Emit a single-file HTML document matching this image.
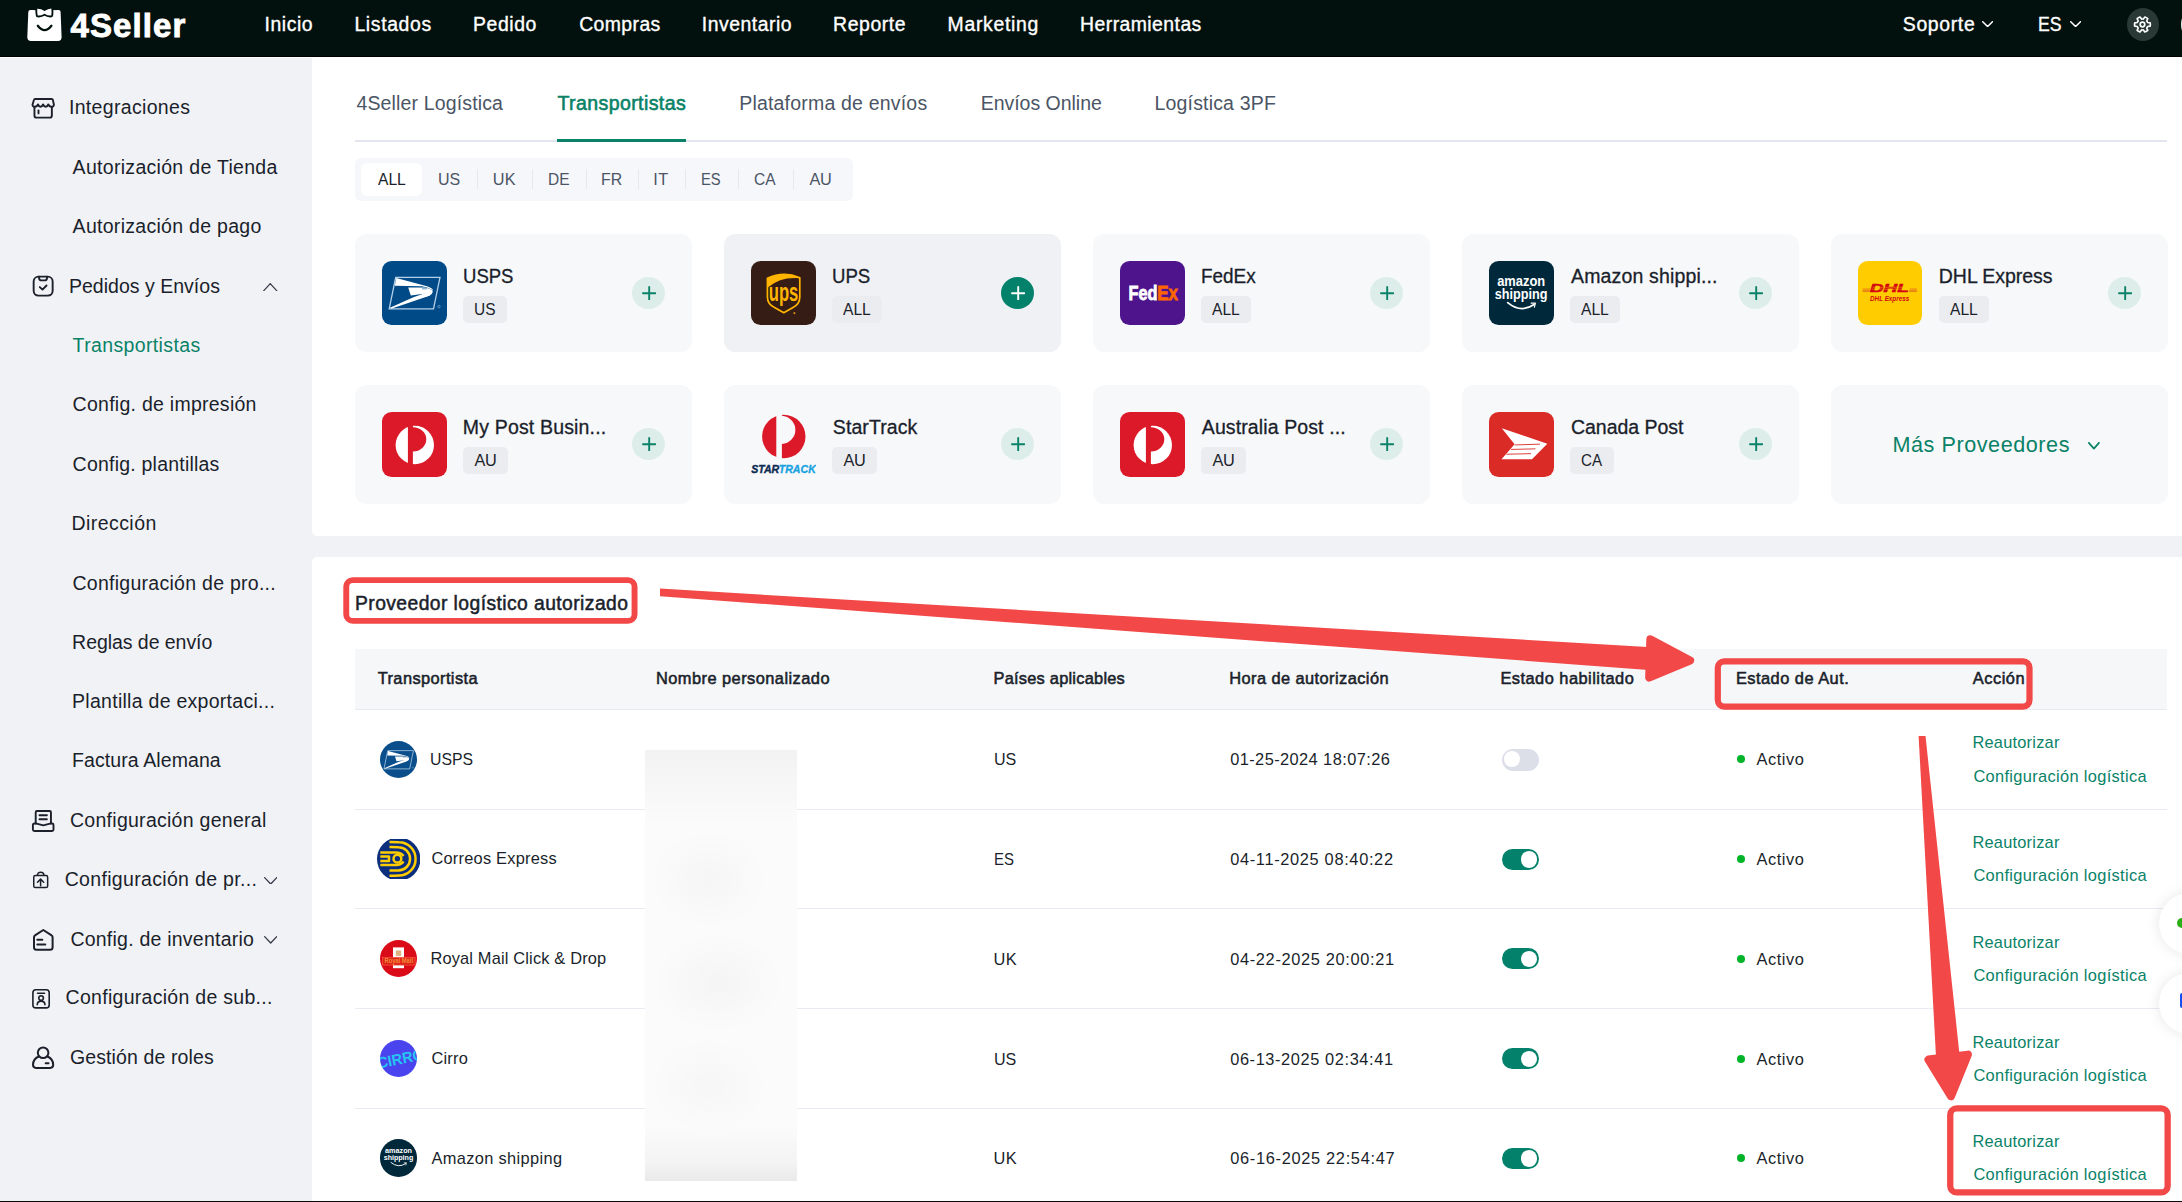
<!DOCTYPE html>
<html><head><meta charset="utf-8"><title>4Seller</title><style>
*{box-sizing:border-box;margin:0;padding:0}
html,body{width:2182px;height:1202px;overflow:hidden;background:#f1f2f6;font-family:"Liberation Sans",sans-serif}
body{position:relative}
div,span.t,svg{position:absolute}
span.t{white-space:pre;display:block}
</style></head><body><div style="left:0px;top:0px;width:2182px;height:57px;background:#02110e;"></div><div style="left:0px;top:56px;width:2182px;height:1px;background:#000;"></div><div style="left:0px;top:57px;width:312px;height:1px;background:#fff;"></div><svg style="left:27px;top:7px" width="36" height="35" viewBox="0 0 36 35">
<path d="M3.300 3.100 H31.600 Q33.500 3.100 33.600 5 L34.600 30 Q34.600 33.900 31 33.900 H4 Q0.300 33.900 0.300 30 L1.300 5 Q1.400 3.100 3.300 3.100Z" fill="#fff"/>
<path d="M10.300 1.700 Q13.800 1.500 17.500 4.100 Q21.200 1.500 24.300 1.500 Q24.900 5 24.300 8.500 Q21.200 9 17.500 6.700 Q13.800 9 10.700 8.500 Q9.900 5 10.300 1.700Z" fill="#02110e" stroke="#02110e" stroke-width="3.600" stroke-linejoin="round"/>
<rect x="6" y="0" width="24" height="3.100" fill="#02110e"/>
<path d="M10.300 1.700 Q13.800 1.500 17.500 4.100 Q21.200 1.500 24.300 1.500 Q24.900 5 24.300 8.500 Q21.200 9 17.500 6.700 Q13.800 9 10.700 8.500 Q9.900 5 10.300 1.700Z" fill="#fff"/>
<path d="M10.800 18.800 Q17.600 27.500 24.400 18.800" fill="none" stroke="#02110e" stroke-width="2.300" stroke-linecap="round"/>
</svg><span class="t" style="top:6.00px;font-size:33px;line-height:40px;color:#fff;left:70.50px;letter-spacing:1.099px;font-weight:700;-webkit-text-stroke:0.9px #fff;">4Seller</span><span class="t" style="top:13.00px;font-size:19.4px;line-height:23px;color:#fff;left:264.60px;letter-spacing:0.543px;-webkit-text-stroke:0.35px #fff;">Inicio</span><span class="t" style="top:13.00px;font-size:19.4px;line-height:23px;color:#fff;left:354.40px;letter-spacing:0.653px;-webkit-text-stroke:0.35px #fff;">Listados</span><span class="t" style="top:13.00px;font-size:19.4px;line-height:23px;color:#fff;left:473.10px;letter-spacing:0.581px;-webkit-text-stroke:0.35px #fff;">Pedido</span><span class="t" style="top:13.00px;font-size:19.4px;line-height:23px;color:#fff;left:579.20px;letter-spacing:0.406px;-webkit-text-stroke:0.35px #fff;">Compras</span><span class="t" style="top:13.00px;font-size:19.4px;line-height:23px;color:#fff;left:701.80px;letter-spacing:0.514px;-webkit-text-stroke:0.35px #fff;">Inventario</span><span class="t" style="top:13.00px;font-size:19.4px;line-height:23px;color:#fff;left:833.10px;letter-spacing:0.583px;-webkit-text-stroke:0.35px #fff;">Reporte</span><span class="t" style="top:13.00px;font-size:19.4px;line-height:23px;color:#fff;left:947.60px;letter-spacing:0.706px;-webkit-text-stroke:0.35px #fff;">Marketing</span><span class="t" style="top:13.00px;font-size:19.4px;line-height:23px;color:#fff;left:1080.10px;letter-spacing:0.438px;-webkit-text-stroke:0.35px #fff;">Herramientas</span><span class="t" style="top:13.00px;font-size:19.4px;line-height:23px;color:#fff;left:1902.80px;letter-spacing:0.662px;-webkit-text-stroke:0.35px #fff;">Soporte</span><span class="t" style="top:13.00px;font-size:19.4px;line-height:23px;color:#fff;left:2038.19px;transform:scaleX(0.9104);transform-origin:0 0;-webkit-text-stroke:0.35px #fff;">ES</span><svg style="left:1981.6px;top:21px" width="11.2" height="6.3" viewBox="0 0 11.2 6.3"><path d="M0.75 0.75 L5.6 5.55 L10.45 0.75" fill="none" stroke="#fff" stroke-width="1.5" stroke-linecap="round" stroke-linejoin="round"/></svg><svg style="left:2069.8px;top:21px" width="11.2" height="6.3" viewBox="0 0 11.2 6.3"><path d="M0.75 0.75 L5.6 5.55 L10.45 0.75" fill="none" stroke="#fff" stroke-width="1.5" stroke-linecap="round" stroke-linejoin="round"/></svg><div style="left:2127px;top:8.1px;width:32px;height:32.9px;border-radius:50%;background:#2a3935;"></div><svg style="left:0;top:0" width="2182" height="57" viewBox="0 0 2182 57" fill="none" stroke="#fff" stroke-width="1.700" stroke-linejoin="round">
<path d="M2147.58 26.47 L2150.18 26.14 A7.9 7.9 0 0 0 2150.18 22.86 L2147.58 22.53 A5.5 5.5 0 0 0 2146.72 21.04 L2147.74 18.63 A7.9 7.9 0 0 0 2144.89 16.99 L2143.31 19.07 A5.5 5.5 0 0 0 2141.59 19.07 L2140.01 16.99 A7.9 7.9 0 0 0 2137.16 18.63 L2138.18 21.04 A5.5 5.5 0 0 0 2137.32 22.53 L2134.72 22.86 A7.9 7.9 0 0 0 2134.72 26.14 L2137.32 26.47 A5.5 5.5 0 0 0 2138.18 27.96 L2137.16 30.37 A7.9 7.9 0 0 0 2140.01 32.01 L2141.59 29.93 A5.5 5.5 0 0 0 2143.31 29.93 L2144.89 32.01 A7.9 7.9 0 0 0 2147.74 30.37 L2146.72 27.96 A5.5 5.5 0 0 0 2147.58 26.47Z"/><circle cx="2142.45" cy="24.5" r="2.300"/></svg><div style="left:2180.6px;top:8.4px;width:32.6px;height:32.6px;border-radius:50%;background:#e8e8e6;"></div><span class="t" style="top:96.00px;font-size:19.5px;line-height:23px;color:#1a1f2b;left:68.90px;letter-spacing:0.331px;">Integraciones</span><span class="t" style="top:156.00px;font-size:19.5px;line-height:23px;color:#1a1f2b;left:72.60px;letter-spacing:0.301px;">Autorización de Tienda</span><span class="t" style="top:215.00px;font-size:19.5px;line-height:23px;color:#1a1f2b;left:72.60px;letter-spacing:0.286px;">Autorización de pago</span><span class="t" style="top:275.00px;font-size:19.5px;line-height:23px;color:#1a1f2b;left:68.90px;letter-spacing:0.025px;">Pedidos y Envíos</span><span class="t" style="top:334.00px;font-size:19.5px;line-height:23px;color:#0a8267;left:72.60px;letter-spacing:0.364px;">Transportistas</span><span class="t" style="top:393.00px;font-size:19.5px;line-height:23px;color:#1a1f2b;left:72.60px;letter-spacing:0.263px;">Config. de impresión</span><span class="t" style="top:453.00px;font-size:19.5px;line-height:23px;color:#1a1f2b;left:72.60px;letter-spacing:0.216px;">Config. plantillas</span><span class="t" style="top:512.00px;font-size:19.5px;line-height:23px;color:#1a1f2b;left:71.60px;letter-spacing:0.421px;">Dirección</span><span class="t" style="top:572.00px;font-size:19.5px;line-height:23px;color:#1a1f2b;left:72.50px;letter-spacing:0.270px;">Configuración de pro...</span><span class="t" style="top:631.00px;font-size:19.5px;line-height:23px;color:#1a1f2b;left:72.10px;letter-spacing:-0.049px;">Reglas de envío</span><span class="t" style="top:690.00px;font-size:19.5px;line-height:23px;color:#1a1f2b;left:72.10px;letter-spacing:0.272px;">Plantilla de exportaci...</span><span class="t" style="top:749.00px;font-size:19.5px;line-height:23px;color:#1a1f2b;left:72.10px;letter-spacing:0.083px;">Factura Alemana</span><span class="t" style="top:809.00px;font-size:19.5px;line-height:23px;color:#1a1f2b;left:70.00px;letter-spacing:0.272px;">Configuración general</span><span class="t" style="top:868.00px;font-size:19.5px;line-height:23px;color:#1a1f2b;left:64.70px;letter-spacing:0.326px;">Configuración de pr...</span><span class="t" style="top:928.00px;font-size:19.5px;line-height:23px;color:#1a1f2b;left:70.40px;letter-spacing:0.229px;">Config. de inventario</span><span class="t" style="top:986.00px;font-size:19.5px;line-height:23px;color:#1a1f2b;left:65.60px;letter-spacing:0.285px;">Configuración de sub...</span><span class="t" style="top:1046.00px;font-size:19.5px;line-height:23px;color:#1a1f2b;left:70.00px;letter-spacing:0.110px;">Gestión de roles</span><svg style="left:263.2px;top:282.7px" width="14.5" height="8.45" viewBox="0 0 14.5 8.45"><path d="M0.625 7.825 L7.25 0.625 L13.875 7.825" fill="none" stroke="#333a46" stroke-width="1.25" stroke-linecap="round" stroke-linejoin="round"/></svg><svg style="left:264px;top:876.8px" width="13.4" height="7.7" viewBox="0 0 13.4 7.7"><path d="M0.65 0.65 L6.7 7.050000000000001 L12.75 0.65" fill="none" stroke="#333a46" stroke-width="1.3" stroke-linecap="round" stroke-linejoin="round"/></svg><svg style="left:264px;top:936.3px" width="13.4" height="7.7" viewBox="0 0 13.4 7.7"><path d="M0.65 0.65 L6.7 7.050000000000001 L12.75 0.65" fill="none" stroke="#333a46" stroke-width="1.3" stroke-linecap="round" stroke-linejoin="round"/></svg>
<svg style="left:31px;top:97px" width="24" height="24" viewBox="0 0 24 24" fill="none" stroke="#1b202b" stroke-width="1.900" stroke-linejoin="round" stroke-linecap="round">
<path d="M4.200 1.950 H20.600 Q21.700 1.950 21.900 2.900 L22.900 7.800 Q22.600 9.800 20.500 9.800 Q18.200 9.800 17.300 7.400 Q16.400 9.800 14.700 9.800 Q13 9.800 12.100 7.400 Q11.200 9.800 9.500 9.800 Q7.800 9.800 7 7.400 Q6.100 9.800 3.900 9.800 Q1.800 9.800 1.500 7.800 L2.900 2.900 Q3.100 1.950 4.200 1.950Z"/>
<path d="M3.450 10 V18.400 Q3.450 20.650 5.700 20.650 H18.600 Q20.850 20.650 20.850 18.400 V10"/>
<path d="M7.500 13.500 V16.400"/>
</svg>
<svg style="left:31px;top:274px" width="24" height="24" viewBox="0 0 24 24" fill="none" stroke="#1b202b" stroke-width="1.900" stroke-linejoin="round" stroke-linecap="round">
<rect x="2.650" y="2.650" width="19" height="19" rx="4.800"/>
<path d="M8.100 2.800 V3.900 Q8.100 6.400 10.600 6.400 H13.500 Q16 6.400 16 3.900 V2.800"/>
<path d="M8.800 13.100 L11.500 15.600 L15.500 11.500"/>
</svg>
<svg style="left:31px;top:809px" width="24" height="24" viewBox="0 0 24 24" fill="none" stroke="#1b202b" stroke-width="1.900" stroke-linejoin="round" stroke-linecap="round">
<path d="M4.700 14.200 V3.200 Q4.700 1.950 5.950 1.950 H18.700 Q19.950 1.950 19.950 3.200 V14.200"/>
<path d="M8.500 6.200 H15.900 M8.500 10.300 H15.900"/>
<path d="M4.700 14.300 L12.300 16.300 L19.950 14.300"/>
<path d="M4.700 14.500 H3.400 Q1.900 14.500 1.900 16 V20.500 Q1.900 22 3.400 22 H21 Q22.500 22 22.500 20.500 V16 Q22.500 14.500 21 14.500 H19.950"/>
</svg>
<svg style="left:32px;top:869.500px" width="18" height="20" viewBox="0 0 18 20" fill="none" stroke="#1b202b" stroke-width="1.500" stroke-linejoin="round" stroke-linecap="round">
<rect x="1.750" y="5.550" width="13.900" height="12" rx="1.600"/>
<path d="M5.500 5.300 Q5.500 2.300 8.700 2.300 Q11.900 2.300 11.900 5.300"/>
<path d="M8.600 9.200 V15.700 M5.500 12.200 L8.600 9.100 L11.700 12.200"/>
</svg>
<svg style="left:32px;top:928px" width="23" height="24" viewBox="0 0 23 24" fill="none" stroke="#1b202b" stroke-width="2" stroke-linejoin="round" stroke-linecap="round">
<path d="M2 9.300 Q2 8 3 7.400 L11.300 2 L19.600 7.400 Q20.600 8 20.600 9.300 V19.200 Q20.600 21.700 18.100 21.700 H4.500 Q2 21.700 2 19.200Z"/>
<path d="M5.300 11.800 H10.300 M5.300 16.400 H13.300"/>
</svg>
<svg style="left:31px;top:988.300px" width="20" height="22" viewBox="0 0 20 22" fill="none" stroke="#1b202b" stroke-width="1.600" stroke-linejoin="round" stroke-linecap="round">
<rect x="1.900" y="1.800" width="16.300" height="18.100" rx="3"/>
<path d="M6.500 5.200 H13.500"/><circle cx="10.100" cy="10" r="2.300"/><path d="M6.200 16.600 Q6.600 13.100 10.100 13.100 Q13.600 13.100 14 16.600"/>
</svg>
<svg style="left:31px;top:1045px" width="24" height="25" viewBox="0 0 24 25" fill="none" stroke="#1b202b" stroke-width="2" stroke-linejoin="round" stroke-linecap="round">
<circle cx="12.100" cy="7.800" r="5.300"/>
<path d="M7.800 11.500 Q2 14 2 19.800 Q2 22.900 5 22.900 H19.200 Q22.200 22.900 22.200 19.800 Q22.200 14 16.400 11.500"/>
<path d="M14.700 18.200 H17.500"/>
</svg>
<div style="left:311.7px;top:57px;width:1871px;height:479px;background:#fff;border-bottom-left-radius:5px;"></div><div style="left:355px;top:140.4px;width:1812px;height:1.6px;background:#e3e6ee;"></div><div style="left:557px;top:138.6px;width:129.2px;height:3.6px;background:#0a8267;"></div><span class="t" style="top:92.00px;font-size:19.5px;line-height:23px;color:#4b5565;left:356.40px;letter-spacing:0.149px;">4Seller Logística</span><span class="t" style="top:92.00px;font-size:19.5px;line-height:23px;color:#0a8267;left:557.50px;letter-spacing:0.410px;-webkit-text-stroke:0.6px #0a8267;">Transportistas</span><span class="t" style="top:92.00px;font-size:19.5px;line-height:23px;color:#4b5565;left:739.20px;letter-spacing:0.194px;">Plataforma de envíos</span><span class="t" style="top:92.00px;font-size:19.5px;line-height:23px;color:#4b5565;left:980.70px;letter-spacing:-0.021px;">Envíos Online</span><span class="t" style="top:92.00px;font-size:19.5px;line-height:23px;color:#4b5565;left:1154.60px;letter-spacing:0.165px;">Logística 3PF</span><div style="left:355px;top:158.2px;width:498px;height:42.4px;background:#f6f7fa;border-radius:6px;"></div><div style="left:361px;top:163.3px;width:61px;height:32.3px;background:#fff;border-radius:6px;"></div><span class="t" style="top:169.00px;font-size:16.3px;line-height:20px;color:#1a1f2b;left:377.80px;transform:scaleX(0.9580);transform-origin:0 0;">ALL</span><span class="t" style="top:169.00px;font-size:16.3px;line-height:20px;color:#4b5565;left:438.12px;transform:scaleX(0.9836);transform-origin:0 0;">US</span><span class="t" style="top:169.00px;font-size:16.3px;line-height:20px;color:#4b5565;left:492.80px;letter-spacing:0.142px;">UK</span><span class="t" style="top:169.00px;font-size:16.3px;line-height:20px;color:#4b5565;left:547.75px;transform:scaleX(0.9514);transform-origin:0 0;">DE</span><span class="t" style="top:169.00px;font-size:16.3px;line-height:20px;color:#4b5565;left:601.23px;transform:scaleX(0.9727);transform-origin:0 0;">FR</span><span class="t" style="top:169.00px;font-size:16.3px;line-height:20px;color:#4b5565;left:653.30px;letter-spacing:0.377px;">IT</span><span class="t" style="top:169.00px;font-size:16.3px;line-height:20px;color:#4b5565;left:700.79px;transform:scaleX(0.9061);transform-origin:0 0;">ES</span><span class="t" style="top:169.00px;font-size:16.3px;line-height:20px;color:#4b5565;left:753.90px;transform:scaleX(0.9535);transform-origin:0 0;">CA</span><span class="t" style="top:169.00px;font-size:16.3px;line-height:20px;color:#4b5565;left:809.40px;letter-spacing:-0.259px;">AU</span><div style="left:476.9px;top:169px;width:1.2px;height:20.4px;background:#e6e8ef;"></div><div style="left:531.8px;top:169px;width:1.2px;height:20.4px;background:#e6e8ef;"></div><div style="left:586.0px;top:169px;width:1.2px;height:20.4px;background:#e6e8ef;"></div><div style="left:638.0px;top:169px;width:1.2px;height:20.4px;background:#e6e8ef;"></div><div style="left:685.1px;top:169px;width:1.2px;height:20.4px;background:#e6e8ef;"></div><div style="left:737.8px;top:169px;width:1.2px;height:20.4px;background:#e6e8ef;"></div><div style="left:792.5px;top:169px;width:1.2px;height:20.4px;background:#e6e8ef;"></div><div style="left:355px;top:234px;width:336.7px;height:118.0px;background:#f7f8fa;border-radius:11.5px;"></div><div style="left:381.90px;top:260.70px;width:65.2px;height:64.6px;background:#004b87;border-radius:9.6px;overflow:hidden;"><svg style="left:0;top:0" width="65.2" height="64.6" viewBox="0 0 65.200 64.600"><path d="M13.700 16.400 H58 L51.500 47.900 H7.200Z" fill="none" stroke="#b4d0e9" stroke-width="1.300"/>
<path d="M14.300 17 L45 25.300 Q50.500 27 51.200 29.500 Q46 26 40 25.300 L12.800 24.700Z" fill="#fff"/>
<path d="M26.200 26.500 L42 26.500 Q48.500 27.500 50.600 29.800 Q50.600 31.600 48 32.200 Q38 33.200 28.800 34.600Z" fill="#fff"/>
<path d="M50.700 30 Q51 33.400 46 35.200 L9.200 47.700 L7.900 46.700 L32 36 Q42 32.500 50.700 30Z" fill="#fff"/>
<path d="M40 27.800 H45" stroke="#004b87" stroke-width="0.600"/>
<circle cx="57" cy="45.600" r="1.200" fill="none" stroke="#a9c9e6" stroke-width="0.500"/></svg></div><span class="t" style="top:265.00px;font-size:19.5px;line-height:23px;color:#1a1f2b;left:462.85px;transform:scaleX(0.9502);transform-origin:0 0;-webkit-text-stroke:0.3px #1a1f2b;">USPS</span><div style="left:463px;top:296.2px;width:44px;height:26.8px;background:#ebecf0;border-radius:5px;"></div><span class="t" style="top:299.00px;font-size:16.3px;line-height:20px;color:#1a1f2b;left:473.70px;transform:scaleX(0.9514);transform-origin:0 0;">US</span><div style="left:632.1px;top:276.7px;width:33px;height:32.4px;background:#ddeeea;border-radius:50%;"></div><svg style="left:641.5px;top:285.5px" width="14.400" height="14.600" viewBox="0 0 14.400 14.600"><path d="M7.200 1 V13.600 M1 7.300 H13.400" stroke="#0a8267" stroke-width="1.900" stroke-linecap="round"/></svg><div style="left:724px;top:234px;width:336.7px;height:118.0px;background:#f0f1f5;border-radius:11.5px;"></div><div style="left:750.90px;top:260.70px;width:65.2px;height:64.6px;background:#351c15;border-radius:9.6px;overflow:hidden;"><svg style="left:0;top:0" width="65.2" height="64.6" viewBox="0 0 65.200 64.600"><path d="M16.400 17.300 Q32.600 9.600 48.800 16.700 V36 Q48.800 43 42 46.500 L32.800 51.700 L23.500 46.500 Q16.400 43 16.400 36Z" fill="none" stroke="#ffb500" stroke-width="1.700" stroke-linejoin="round"/>
<path d="M16.400 17.300 Q32.600 9.600 48.800 16.700 L48.600 17.300 Q30 15.500 16.800 26.500Z" fill="#ffb500"/>
<text x="0" y="0" font-family="Liberation Sans, sans-serif" font-weight="700" font-size="26" fill="#ffb500" transform="translate(17.800,39.800) scale(0.640,1)">ups</text>
<circle cx="43.400" cy="52.200" r="1.100" fill="#c98a10"/></svg></div><span class="t" style="top:265.00px;font-size:19.5px;line-height:23px;color:#1a1f2b;left:831.85px;transform:scaleX(0.9542);transform-origin:0 0;-webkit-text-stroke:0.3px #1a1f2b;">UPS</span><div style="left:832px;top:296.2px;width:50px;height:26.8px;background:#ebecf0;border-radius:5px;"></div><span class="t" style="top:299.00px;font-size:16.3px;line-height:20px;color:#1a1f2b;left:843.15px;transform:scaleX(0.9580);transform-origin:0 0;">ALL</span><div style="left:1001.1px;top:276.7px;width:33px;height:32.4px;background:#04816a;border-radius:50%;"></div><svg style="left:1010.5px;top:285.5px" width="14.400" height="14.600" viewBox="0 0 14.400 14.600"><path d="M7.200 1 V13.600 M1 7.300 H13.400" stroke="#fff" stroke-width="1.900" stroke-linecap="round"/></svg><div style="left:1093px;top:234px;width:336.7px;height:118.0px;background:#f7f8fa;border-radius:11.5px;"></div><div style="left:1119.90px;top:260.70px;width:65.2px;height:64.6px;background:#4d148c;border-radius:9.6px;overflow:hidden;"><svg style="left:0;top:0" width="65.2" height="64.6" viewBox="0 0 65.200 64.600"><text x="8.600" y="39" font-family="Liberation Sans, sans-serif" font-weight="700" font-size="19.800" fill="#fff" stroke="#fff" stroke-width="0.800" textLength="29" lengthAdjust="spacingAndGlyphs">Fed</text>
<text x="37.200" y="39" font-family="Liberation Sans, sans-serif" font-weight="700" font-size="19.800" fill="#ff6600" stroke="#ff6600" stroke-width="0.800" textLength="20.800" lengthAdjust="spacingAndGlyphs">Ex</text></svg></div><span class="t" style="top:265.00px;font-size:19.5px;line-height:23px;color:#1a1f2b;left:1200.83px;transform:scaleX(0.9693);transform-origin:0 0;-webkit-text-stroke:0.3px #1a1f2b;">FedEx</span><div style="left:1201px;top:296.2px;width:50px;height:26.8px;background:#ebecf0;border-radius:5px;"></div><span class="t" style="top:299.00px;font-size:16.3px;line-height:20px;color:#1a1f2b;left:1212.15px;transform:scaleX(0.9580);transform-origin:0 0;">ALL</span><div style="left:1370.1px;top:276.7px;width:33px;height:32.4px;background:#ddeeea;border-radius:50%;"></div><svg style="left:1379.5px;top:285.5px" width="14.400" height="14.600" viewBox="0 0 14.400 14.600"><path d="M7.200 1 V13.600 M1 7.300 H13.400" stroke="#0a8267" stroke-width="1.900" stroke-linecap="round"/></svg><div style="left:1462.2px;top:234px;width:336.7px;height:118.0px;background:#f7f8fa;border-radius:11.5px;"></div><div style="left:1489.10px;top:260.70px;width:65.2px;height:64.6px;background:#00283b;border-radius:9.6px;overflow:hidden;"><svg style="left:0;top:0" width="65.2" height="64.6" viewBox="0 0 65.200 64.600"><text x="8.200" y="25.300" font-family="Liberation Sans, sans-serif" font-weight="700" font-size="14" fill="#fff" textLength="48" lengthAdjust="spacingAndGlyphs">amazon</text>
<text x="5.700" y="37.700" font-family="Liberation Sans, sans-serif" font-weight="700" font-size="14.400" fill="#fff" textLength="52.800" lengthAdjust="spacingAndGlyphs">shipping</text>
<path d="M18.700 41.600 Q32 52.500 45 43.500" fill="none" stroke="#fff" stroke-width="1.700" stroke-linecap="round"/>
<path d="M42.200 42.200 L46.400 42 L45.400 46.200" fill="none" stroke="#fff" stroke-width="1.200" stroke-linecap="round" stroke-linejoin="round"/></svg></div><span class="t" style="top:265.00px;font-size:19.5px;line-height:23px;color:#1a1f2b;left:1571.00px;letter-spacing:0.157px;-webkit-text-stroke:0.3px #1a1f2b;">Amazon shippi...</span><div style="left:1570.2px;top:296.2px;width:50px;height:26.8px;background:#ebecf0;border-radius:5px;"></div><span class="t" style="top:299.00px;font-size:16.3px;line-height:20px;color:#1a1f2b;left:1581.35px;transform:scaleX(0.9580);transform-origin:0 0;">ALL</span><div style="left:1739.3000000000002px;top:276.7px;width:33px;height:32.4px;background:#ddeeea;border-radius:50%;"></div><svg style="left:1748.7px;top:285.5px" width="14.400" height="14.600" viewBox="0 0 14.400 14.600"><path d="M7.200 1 V13.600 M1 7.300 H13.400" stroke="#0a8267" stroke-width="1.900" stroke-linecap="round"/></svg><div style="left:1831px;top:234px;width:336.7px;height:118.0px;background:#f7f8fa;border-radius:11.5px;"></div><div style="left:1857.90px;top:260.70px;width:64.4px;height:64.6px;background:#ffcc00;border-radius:9.6px;overflow:hidden;"><svg style="left:0;top:0" width="64.4" height="64.6" viewBox="0 0 65.200 64.600"><path d="M4.700 28 H12.500 M4.700 29.300 H12 M4.700 30.500 H11.500 M52.500 28 H59.700 M52 29.300 H59.700 M51.500 30.500 H59.700" stroke="#e8781a" stroke-width="0.900"/>
<text x="0" y="0" font-family="Liberation Sans, sans-serif" font-weight="700" font-style="italic" font-size="11.500" fill="#d40511" stroke="#d40511" stroke-width="0.600" transform="translate(12.100,30.700) scale(1.660,0.880)">DHL</text>
<path d="M15 26.200 H50 M14 28.100 H50" stroke="#ffcc00" stroke-width="0.450"/>
<text x="12.200" y="39.900" font-family="Liberation Sans, sans-serif" font-weight="700" font-style="italic" font-size="7.200" fill="#d40511" textLength="39.600" lengthAdjust="spacingAndGlyphs">DHL Express</text></svg></div><span class="t" style="top:265.00px;font-size:19.5px;line-height:23px;color:#1a1f2b;left:1938.80px;letter-spacing:-0.042px;-webkit-text-stroke:0.3px #1a1f2b;">DHL Express</span><div style="left:1939px;top:296.2px;width:50px;height:26.8px;background:#ebecf0;border-radius:5px;"></div><span class="t" style="top:299.00px;font-size:16.3px;line-height:20px;color:#1a1f2b;left:1950.15px;transform:scaleX(0.9580);transform-origin:0 0;">ALL</span><div style="left:2108.1px;top:276.7px;width:33px;height:32.4px;background:#ddeeea;border-radius:50%;"></div><svg style="left:2117.5px;top:285.5px" width="14.400" height="14.600" viewBox="0 0 14.400 14.600"><path d="M7.200 1 V13.600 M1 7.300 H13.400" stroke="#0a8267" stroke-width="1.900" stroke-linecap="round"/></svg><div style="left:355px;top:385px;width:336.7px;height:118.5px;background:#f7f8fa;border-radius:11.5px;"></div><div style="left:381.90px;top:412.10px;width:65.2px;height:64.7px;background:#dc1928;border-radius:9.6px;overflow:hidden;"><svg style="left:0;top:0" width="65.2" height="64.7" viewBox="0 0 65.200 64.600"><circle cx="32.800" cy="33" r="19.200" fill="#fff"/>
<path d="M25.900 12 H30.900 V15.200 A13.400 12.100 0 0 1 30.900 39.400 V55 H25.900Z" fill="#dc1928"/></svg></div><span class="t" style="top:416.00px;font-size:19.5px;line-height:23px;color:#1a1f2b;left:462.80px;letter-spacing:0.169px;-webkit-text-stroke:0.3px #1a1f2b;">My Post Busin...</span><div style="left:463px;top:447.2px;width:44.5px;height:26.8px;background:#ebecf0;border-radius:5px;"></div><span class="t" style="top:450.00px;font-size:16.3px;line-height:20px;color:#1a1f2b;left:474.45px;letter-spacing:-0.259px;">AU</span><div style="left:632.1px;top:427.7px;width:33px;height:32.4px;background:#ddeeea;border-radius:50%;"></div><svg style="left:641.5px;top:436.5px" width="14.400" height="14.600" viewBox="0 0 14.400 14.600"><path d="M7.200 1 V13.600 M1 7.300 H13.400" stroke="#0a8267" stroke-width="1.900" stroke-linecap="round"/></svg><div style="left:724px;top:385px;width:336.7px;height:118.5px;background:#f7f8fa;border-radius:11.5px;"></div><div style="left:750.90px;top:412.10px;width:65.2px;height:64.7px;background:transparent;border-radius:0px;overflow:hidden;"><svg style="left:0;top:0" width="65.2" height="64.7" viewBox="0 0 65.200 64.600"><circle cx="32.800" cy="24.500" r="21.700" fill="#dc1928"/>
<path d="M25.300 1 H30.900 V3.700 A14.700 14.200 0 0 1 30.900 32 V48 H25.300Z" fill="#f7f8fa"/>
<text x="0.200" y="61" font-family="Liberation Sans, sans-serif" font-weight="700" font-style="italic" font-size="10.600" fill="#0c2c52" stroke="#0c2c52" stroke-width="0.350" textLength="28" lengthAdjust="spacingAndGlyphs">STAR</text>
<text x="27.800" y="61" font-family="Liberation Sans, sans-serif" font-weight="700" font-style="italic" font-size="10.600" fill="#1aa3e0" stroke="#1aa3e0" stroke-width="0.350" textLength="37" lengthAdjust="spacingAndGlyphs">TRACK</text></svg></div><span class="t" style="top:416.00px;font-size:19.5px;line-height:23px;color:#1a1f2b;left:832.80px;letter-spacing:0.095px;-webkit-text-stroke:0.3px #1a1f2b;">StarTrack</span><div style="left:832px;top:447.2px;width:44.5px;height:26.8px;background:#ebecf0;border-radius:5px;"></div><span class="t" style="top:450.00px;font-size:16.3px;line-height:20px;color:#1a1f2b;left:843.45px;letter-spacing:-0.259px;">AU</span><div style="left:1001.1px;top:427.7px;width:33px;height:32.4px;background:#ddeeea;border-radius:50%;"></div><svg style="left:1010.5px;top:436.5px" width="14.400" height="14.600" viewBox="0 0 14.400 14.600"><path d="M7.200 1 V13.600 M1 7.300 H13.400" stroke="#0a8267" stroke-width="1.900" stroke-linecap="round"/></svg><div style="left:1093px;top:385px;width:336.7px;height:118.5px;background:#f7f8fa;border-radius:11.5px;"></div><div style="left:1119.90px;top:412.10px;width:65.2px;height:64.7px;background:#dc1928;border-radius:9.6px;overflow:hidden;"><svg style="left:0;top:0" width="65.2" height="64.7" viewBox="0 0 65.200 64.600"><circle cx="32.800" cy="33" r="19.200" fill="#fff"/>
<path d="M25.900 12 H30.900 V15.200 A13.400 12.100 0 0 1 30.900 39.400 V55 H25.900Z" fill="#dc1928"/></svg></div><span class="t" style="top:416.00px;font-size:19.5px;line-height:23px;color:#1a1f2b;left:1201.80px;letter-spacing:0.108px;-webkit-text-stroke:0.3px #1a1f2b;">Australia Post ...</span><div style="left:1201px;top:447.2px;width:44.5px;height:26.8px;background:#ebecf0;border-radius:5px;"></div><span class="t" style="top:450.00px;font-size:16.3px;line-height:20px;color:#1a1f2b;left:1212.45px;letter-spacing:-0.259px;">AU</span><div style="left:1370.1px;top:427.7px;width:33px;height:32.4px;background:#ddeeea;border-radius:50%;"></div><svg style="left:1379.5px;top:436.5px" width="14.400" height="14.600" viewBox="0 0 14.400 14.600"><path d="M7.200 1 V13.600 M1 7.300 H13.400" stroke="#0a8267" stroke-width="1.900" stroke-linecap="round"/></svg><div style="left:1462.2px;top:385px;width:336.7px;height:118.5px;background:#f7f8fa;border-radius:11.5px;"></div><div style="left:1489.10px;top:412.10px;width:65.2px;height:64.7px;background:#da2b27;border-radius:9.6px;overflow:hidden;"><svg style="left:0;top:0" width="65.2" height="64.7" viewBox="0 0 65.200 64.600"><path d="M12.800 16.100 L58.300 31.600 L43 47.300 H12.500 L25.600 32.300Z" fill="#fff"/>
<path d="M25.800 32.900 L51 32.100 M22 37.400 L46.500 36.800 M17.500 42.200 L42 41.600" stroke="#da2b27" stroke-width="0.900"/></svg></div><span class="t" style="top:416.00px;font-size:19.5px;line-height:23px;color:#1a1f2b;left:1571.00px;letter-spacing:-0.043px;-webkit-text-stroke:0.3px #1a1f2b;">Canada Post</span><div style="left:1570.2px;top:447.2px;width:43.6px;height:26.8px;background:#ebecf0;border-radius:5px;"></div><span class="t" style="top:450.00px;font-size:16.3px;line-height:20px;color:#1a1f2b;left:1581.40px;transform:scaleX(0.9315);transform-origin:0 0;">CA</span><div style="left:1739.3000000000002px;top:427.7px;width:33px;height:32.4px;background:#ddeeea;border-radius:50%;"></div><svg style="left:1748.7px;top:436.5px" width="14.400" height="14.600" viewBox="0 0 14.400 14.600"><path d="M7.200 1 V13.600 M1 7.300 H13.400" stroke="#0a8267" stroke-width="1.900" stroke-linecap="round"/></svg><div style="left:1831px;top:385px;width:336.7px;height:118.5px;background:#f7f8fa;border-radius:11.5px;"></div><span class="t" style="top:432.00px;font-size:21.6px;line-height:26px;color:#0a8267;left:1892.40px;letter-spacing:0.562px;">Más Proveedores</span><svg style="left:2088px;top:442.2px" width="11.8" height="7.5" viewBox="0 0 11.8 7.5"><path d="M0.85 0.85 L5.9 6.6499999999999995 L10.950000000000001 0.85" fill="none" stroke="#0a8267" stroke-width="1.7" stroke-linecap="round" stroke-linejoin="round"/></svg><div style="left:311.7px;top:556.8px;width:1871px;height:660px;background:#fff;border-top-left-radius:5px;"></div><span class="t" style="top:592.00px;font-size:19.3px;line-height:23px;color:#1a1f2b;left:355.00px;letter-spacing:0.430px;-webkit-text-stroke:0.5px #1a1f2b;">Proveedor logístico autorizado</span><div style="left:355px;top:649px;width:1812px;height:60.3px;background:#f6f7f9;"></div><div style="left:355px;top:709px;width:1812px;height:1.2px;background:#e9ebf2;"></div><div style="left:355px;top:809px;width:1812px;height:1.2px;background:#e9ebf2;"></div><div style="left:355px;top:908px;width:1812px;height:1.2px;background:#e9ebf2;"></div><div style="left:355px;top:1008px;width:1812px;height:1.2px;background:#e9ebf2;"></div><div style="left:355px;top:1108px;width:1812px;height:1.2px;background:#e9ebf2;"></div><span class="t" style="top:668.00px;font-size:16.4px;line-height:20px;color:#1a1f2b;left:377.70px;letter-spacing:0.406px;-webkit-text-stroke:0.55px #1a1f2b;">Transportista</span><span class="t" style="top:668.00px;font-size:16.4px;line-height:20px;color:#1a1f2b;left:656.00px;letter-spacing:0.453px;-webkit-text-stroke:0.55px #1a1f2b;">Nombre personalizado</span><span class="t" style="top:668.00px;font-size:16.4px;line-height:20px;color:#1a1f2b;left:993.50px;letter-spacing:0.234px;-webkit-text-stroke:0.55px #1a1f2b;">Países aplicables</span><span class="t" style="top:668.00px;font-size:16.4px;line-height:20px;color:#1a1f2b;left:1229.20px;letter-spacing:0.430px;-webkit-text-stroke:0.55px #1a1f2b;">Hora de autorización</span><span class="t" style="top:668.00px;font-size:16.4px;line-height:20px;color:#1a1f2b;left:1500.40px;letter-spacing:0.479px;-webkit-text-stroke:0.55px #1a1f2b;">Estado habilitado</span><span class="t" style="top:668.00px;font-size:16.4px;line-height:20px;color:#1a1f2b;left:1735.90px;letter-spacing:0.479px;-webkit-text-stroke:0.55px #1a1f2b;">Estado de Aut.</span><span class="t" style="top:668.00px;font-size:16.4px;line-height:20px;color:#1a1f2b;left:1972.80px;letter-spacing:0.504px;-webkit-text-stroke:0.55px #1a1f2b;">Acción</span><div style="left:379.90px;top:740.50px;width:37.4px;height:37.4px;background:#0a4f8c;border-radius:50%;overflow:hidden;"><svg style="left:0;top:0" width="37.4" height="37.4" viewBox="0 0 37.400 37.400"><g transform="translate(-0.200,0.100) scale(0.580)"><path d="M13.700 16.400 H58 L51.500 47.900 H7.200Z" fill="none" stroke="#b4d0e9" stroke-width="1.300"/>
<path d="M14.300 17 L45 25.300 Q50.500 27 51.200 29.500 Q46 26 40 25.300 L12.800 24.700Z" fill="#fff"/>
<path d="M26.200 26.500 L42 26.500 Q48.500 27.500 50.600 29.800 Q50.600 31.600 48 32.200 Q38 33.200 28.800 34.600Z" fill="#fff"/>
<path d="M50.700 30 Q51 33.400 46 35.200 L9.200 47.700 L7.900 46.700 L32 36 Q42 32.500 50.700 30Z" fill="#fff"/>
<path d="M40 27.800 H45" stroke="#004b87" stroke-width="0.600"/>
<circle cx="57" cy="45.600" r="1.200" fill="none" stroke="#a9c9e6" stroke-width="0.500"/></g></svg></div><span class="t" style="top:749.00px;font-size:16.4px;line-height:20px;color:#1a1f2b;left:430.44px;transform:scaleX(0.9634);transform-origin:0 0;">USPS</span><span class="t" style="top:749.00px;font-size:16.4px;line-height:20px;color:#1a1f2b;left:993.62px;transform:scaleX(0.9800);transform-origin:0 0;">US</span><span class="t" style="top:749.00px;font-size:16.4px;line-height:20px;color:#1a1f2b;left:1230.20px;letter-spacing:0.412px;">01-25-2024 18:07:26</span><div style="left:1501.9px;top:748.8px;width:37px;height:22.2px;background:#dcdfe8;border-radius:11.100px;"></div><div style="left:1503.7px;top:750.6999999999999px;width:16.4px;height:16.8px;background:#fff;border-radius:50%;"></div><div style="left:1736.8px;top:754.7px;width:8.4px;height:8.4px;background:#00b42a;border-radius:50%;"></div><span class="t" style="top:749.00px;font-size:16.4px;line-height:20px;color:#1a1f2b;left:1756.60px;letter-spacing:0.516px;">Activo</span><span class="t" style="top:732.00px;font-size:16.4px;line-height:20px;color:#0a8267;left:1972.40px;letter-spacing:0.224px;">Reautorizar</span><span class="t" style="top:766.00px;font-size:16.4px;line-height:20px;color:#0a8267;left:1973.40px;letter-spacing:0.336px;">Configuración logística</span><div style="left:376.90px;top:838.70px;width:43.400px;height:40.200px;overflow:hidden;"><svg style="left:0;top:0" width="43.400" height="40.200" viewBox="0 0 43.400 40.200"><circle cx="21.7" cy="20.1" r="21.700" fill="#0b2f7c"/>
<g fill="none" stroke="#ffcd00" stroke-width="2.500" stroke-linecap="butt" stroke-linejoin="round">
<path d="M12.500 3.100 Q17 3.100 22 3.300 A16.500 16.500 0 0 1 22 36.500 Q17 36.700 12.500 36.700"/>
<path d="M12.500 8 Q17 8 21.500 8.200 A11.600 11.600 0 0 1 21.500 31.400 Q17 31.600 12.500 31.600"/>
<circle cx="20.400" cy="19.700" r="3.900"/>
<path d="M3.300 13.400 H19 Q24 13.400 26.600 17 M3.300 26 H19 Q24 26 26.600 22.500"/>
<path d="M3.300 17.600 H12 V21.900 H3.300"/>
</g></svg></div><span class="t" style="top:848.00px;font-size:16.4px;line-height:20px;color:#1a1f2b;left:431.40px;letter-spacing:0.231px;">Correos Express</span><span class="t" style="top:849.00px;font-size:16.4px;line-height:20px;color:#1a1f2b;left:993.69px;transform:scaleX(0.9125);transform-origin:0 0;">ES</span><span class="t" style="top:849.00px;font-size:16.4px;line-height:20px;color:#1a1f2b;left:1230.20px;letter-spacing:0.658px;">04-11-2025 08:40:22</span><div style="left:1501.9px;top:848.9px;width:37px;height:21.2px;background:#04816a;border-radius:10.600px;"></div><div style="left:1520.8px;top:851.3px;width:16.4px;height:16.4px;background:#fff;border-radius:50%;"></div><div style="left:1736.8px;top:854.7px;width:8.4px;height:8.4px;background:#00b42a;border-radius:50%;"></div><span class="t" style="top:849.00px;font-size:16.4px;line-height:20px;color:#1a1f2b;left:1756.60px;letter-spacing:0.516px;">Activo</span><span class="t" style="top:832.00px;font-size:16.4px;line-height:20px;color:#0a8267;left:1972.40px;letter-spacing:0.224px;">Reautorizar</span><span class="t" style="top:865.00px;font-size:16.4px;line-height:20px;color:#0a8267;left:1973.40px;letter-spacing:0.336px;">Configuración logística</span><div style="left:380.00px;top:939.60px;width:37.4px;height:37.4px;background:#da0a18;border-radius:50%;overflow:hidden;"><svg style="left:0;top:0" width="37.4" height="37.4" viewBox="0 0 37.400 37.400"><rect x="13" y="7.400" width="11" height="20.800" fill="#fff"/>
<rect x="15.800" y="10.500" width="5.400" height="5.400" fill="#e0b080"/>
<rect x="2.400" y="17.300" width="32.700" height="7.800" fill="#dd2418" stroke="#ff5546" stroke-width="0.700"/>
<text x="4.600" y="23.400" font-family="Liberation Sans, sans-serif" font-weight="700" font-size="6.400" fill="#f5893a" textLength="28.400" lengthAdjust="spacingAndGlyphs">Royal Mail</text></svg></div><span class="t" style="top:948.00px;font-size:16.4px;line-height:20px;color:#1a1f2b;left:430.40px;letter-spacing:0.167px;">Royal Mail Click &amp; Drop</span><span class="t" style="top:949.00px;font-size:16.4px;line-height:20px;color:#1a1f2b;left:993.60px;letter-spacing:0.363px;">UK</span><span class="t" style="top:949.00px;font-size:16.4px;line-height:20px;color:#1a1f2b;left:1230.20px;letter-spacing:0.657px;">04-22-2025 20:00:21</span><div style="left:1501.9px;top:948.3px;width:37px;height:21.2px;background:#04816a;border-radius:10.600px;"></div><div style="left:1520.8px;top:950.6999999999999px;width:16.4px;height:16.4px;background:#fff;border-radius:50%;"></div><div style="left:1736.8px;top:954.7px;width:8.4px;height:8.4px;background:#00b42a;border-radius:50%;"></div><span class="t" style="top:949.00px;font-size:16.4px;line-height:20px;color:#1a1f2b;left:1756.60px;letter-spacing:0.516px;">Activo</span><span class="t" style="top:932.00px;font-size:16.4px;line-height:20px;color:#0a8267;left:1972.40px;letter-spacing:0.224px;">Reautorizar</span><span class="t" style="top:965.00px;font-size:16.4px;line-height:20px;color:#0a8267;left:1973.40px;letter-spacing:0.336px;">Configuración logística</span><div style="left:379.80px;top:1039.90px;width:37.2px;height:37.2px;background:#4a44ee;border-radius:50%;overflow:hidden;"><svg style="left:0;top:0" width="37.2" height="37.2" viewBox="0 0 37.400 37.400"><text x="0" y="0" font-family="Liberation Sans, sans-serif" font-weight="700" font-size="15.500" fill="#25c6f2" transform="translate(-1.600,28.600) rotate(-11)" textLength="47.500" lengthAdjust="spacingAndGlyphs">CIRRO</text></svg></div><span class="t" style="top:1048.00px;font-size:16.4px;line-height:20px;color:#1a1f2b;left:431.40px;letter-spacing:0.251px;">Cirro</span><span class="t" style="top:1049.00px;font-size:16.4px;line-height:20px;color:#1a1f2b;left:993.62px;transform:scaleX(0.9800);transform-origin:0 0;">US</span><span class="t" style="top:1049.00px;font-size:16.4px;line-height:20px;color:#1a1f2b;left:1230.20px;letter-spacing:0.590px;">06-13-2025 02:34:41</span><div style="left:1501.9px;top:1048.1px;width:37px;height:21.2px;background:#04816a;border-radius:10.600px;"></div><div style="left:1520.8px;top:1050.5px;width:16.4px;height:16.4px;background:#fff;border-radius:50%;"></div><div style="left:1736.8px;top:1054.7px;width:8.4px;height:8.4px;background:#00b42a;border-radius:50%;"></div><span class="t" style="top:1049.00px;font-size:16.4px;line-height:20px;color:#1a1f2b;left:1756.60px;letter-spacing:0.516px;">Activo</span><span class="t" style="top:1032.00px;font-size:16.4px;line-height:20px;color:#0a8267;left:1972.40px;letter-spacing:0.224px;">Reautorizar</span><span class="t" style="top:1065.00px;font-size:16.4px;line-height:20px;color:#0a8267;left:1973.40px;letter-spacing:0.336px;">Configuración logística</span><div style="left:379.90px;top:1139.40px;width:37.4px;height:37.4px;background:#00283b;border-radius:50%;overflow:hidden;"><svg style="left:0;top:0" width="37.4" height="37.4" viewBox="0 0 37.400 37.400"><g transform="translate(0.500,0.200) scale(0.560)"><text x="8.200" y="25.300" font-family="Liberation Sans, sans-serif" font-weight="700" font-size="14" fill="#fff" textLength="48" lengthAdjust="spacingAndGlyphs">amazon</text>
<text x="5.700" y="37.700" font-family="Liberation Sans, sans-serif" font-weight="700" font-size="14.400" fill="#fff" textLength="52.800" lengthAdjust="spacingAndGlyphs">shipping</text>
<path d="M18.700 41.600 Q32 52.500 45 43.500" fill="none" stroke="#fff" stroke-width="1.700" stroke-linecap="round"/>
<path d="M42.200 42.200 L46.400 42 L45.400 46.200" fill="none" stroke="#fff" stroke-width="1.200" stroke-linecap="round" stroke-linejoin="round"/></g></svg></div><span class="t" style="top:1148.00px;font-size:16.4px;line-height:20px;color:#1a1f2b;left:431.40px;letter-spacing:0.348px;">Amazon shipping</span><span class="t" style="top:1148.00px;font-size:16.4px;line-height:20px;color:#1a1f2b;left:993.60px;letter-spacing:0.363px;">UK</span><span class="t" style="top:1148.00px;font-size:16.4px;line-height:20px;color:#1a1f2b;left:1230.20px;letter-spacing:0.679px;">06-16-2025 22:54:47</span><div style="left:1501.9px;top:1147.8px;width:37px;height:21.2px;background:#04816a;border-radius:10.600px;"></div><div style="left:1520.8px;top:1150.2px;width:16.4px;height:16.4px;background:#fff;border-radius:50%;"></div><div style="left:1736.8px;top:1153.7px;width:8.4px;height:8.4px;background:#00b42a;border-radius:50%;"></div><span class="t" style="top:1148.00px;font-size:16.4px;line-height:20px;color:#1a1f2b;left:1756.60px;letter-spacing:0.516px;">Activo</span><span class="t" style="top:1131.00px;font-size:16.4px;line-height:20px;color:#0a8267;left:1972.40px;letter-spacing:0.224px;">Reautorizar</span><span class="t" style="top:1164.00px;font-size:16.4px;line-height:20px;color:#0a8267;left:1973.40px;letter-spacing:0.336px;">Configuración logística</span><div style="left:645px;top:750px;width:152px;height:430.8px;background:linear-gradient(to bottom,rgba(0,0,0,0.035) 0,rgba(0,0,0,0) 75px),linear-gradient(to top,rgba(0,0,0,0.072) 0,rgba(0,0,0,0.03) 18px,rgba(0,0,0,0) 55px),radial-gradient(ellipse 60px 50px at 42% 30%,rgba(0,0,0,0.022),rgba(0,0,0,0) 100%),radial-gradient(ellipse 66px 50px at 48% 54%,rgba(0,0,0,0.026),rgba(0,0,0,0) 100%),radial-gradient(ellipse 60px 50px at 42% 78%,rgba(0,0,0,0.02),rgba(0,0,0,0) 100%),#fbfbfb;"></div><div style="left:2159px;top:892.5px;width:61px;height:61px;background:#fff;border-radius:50%;box-shadow:0 0 14px rgba(0,0,0,0.10);"></div><div style="left:2176.8px;top:917.8px;width:10.4px;height:10.4px;background:#2cae16;border-radius:50%;"></div><div style="left:2159px;top:973px;width:61px;height:61px;background:#fff;border-radius:50%;box-shadow:0 0 14px rgba(0,0,0,0.10);"></div><div style="left:2179.8px;top:992.6px;width:8px;height:15.6px;background:#1550f0;border-radius:2px;"></div><svg style="left:0;top:0" width="2182" height="1202" viewBox="0 0 2182 1202"><rect x="346.250" y="580.100" width="288.300" height="40.800" rx="6.500" fill="none" stroke="#f24848" stroke-width="5.900"/><rect x="1717.800" y="661.300" width="311.700" height="45.300" rx="6.500" fill="none" stroke="#f24848" stroke-width="6.200"/><rect x="1950.250" y="1108.350" width="217.400" height="84.100" rx="6.500" fill="none" stroke="#f24848" stroke-width="6.300"/><path d="M660 588.600 L1656 647.500 L1655 670.500 L660 596.200Z" fill="#f24848"/><path d="M1650.31 639.37 L1690.14 660.64 L1649.18 677.55Z" fill="#f24848" stroke="#f24848" stroke-width="8" stroke-linejoin="round"/><path d="M1918.600 736 L1925.500 736 L1960.300 1062 L1936.400 1064Z" fill="#f24848"/><path d="M1967.94 1054.62 L1951.06 1096.36 L1928.46 1059.59Z" fill="#f24848" stroke="#f24848" stroke-width="8" stroke-linejoin="round"/></svg><div style="left:0px;top:1201px;width:2182px;height:1px;background:#0a0a0a;"></div></body></html>
